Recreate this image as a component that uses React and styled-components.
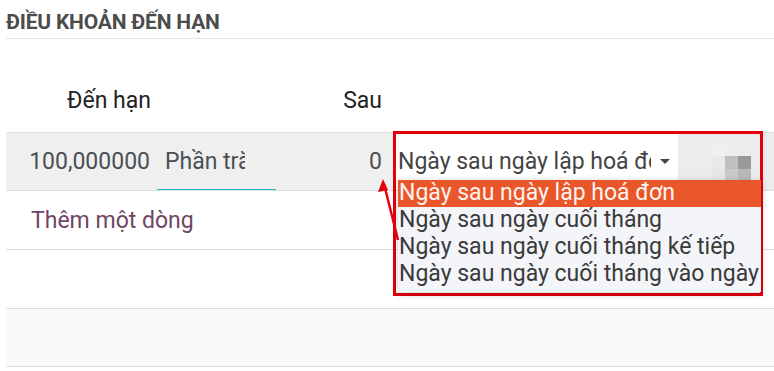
import React from "react";
import styled, { createGlobalStyle } from "styled-components";

const Global = createGlobalStyle`
  html, body { margin: 0; padding: 0; background: #fff; }
  body { font-family: Roboto, "Noto Sans", sans-serif; width: 774px; height: 371px; overflow: hidden; }
`;

const Page = styled.div`
  position: relative;
  padding-left: 6px;
`;

const Title = styled.h2`
  margin: 0;
  height: 39px;
  box-sizing: border-box;
  padding-top: 10px;
  font-size: 21px;
  line-height: 24px;
  font-weight: 700;
  color: #4c4c4c;
  border-bottom: 1px solid #e2e2e2;
  letter-spacing: -0.2px;
`;

const Grid = styled.div`
  display: grid;
  grid-template-columns: 151px 119px 110px 7px 285px 1fr;
`;

const HeadRow = styled.div`
  display: contents;
`;

const HeadCell = styled.div`
  height: 93px;
  box-sizing: border-box;
  display: flex;
  align-items: flex-end;
  justify-content: ${(p) => (p.$right ? "flex-end" : "flex-start")};
  padding: 0 ${(p) => p.$pr || 0}px 18px 0;
  font-size: 23px;
  color: #222;
`;

const Cell = styled.div`
  height: ${(p) => p.$h || 58}px;
  box-sizing: border-box;
  border-top: 1px solid #dedede;
  background: ${(p) => p.$bg || "#fff"};
  display: flex;
  align-items: center;
  justify-content: ${(p) => (p.$right ? "flex-end" : "flex-start")};
  padding-right: ${(p) => p.$pr || 0}px;
  font-size: 23px;
  color: #4a4f55;
  overflow: hidden;
`;

const FullCell = styled(Cell)`
  grid-column: 1 / -1;
  padding-left: 25px;
`;

const LastCell = styled(FullCell)`
  border-bottom: 1px solid #dedede;
`;

const AddLine = styled.span`
  color: #6f4466;
`;

const InputBox = styled.div`
  align-self: stretch;
  width: 100%;
  display: flex;
  align-items: center;
  border-bottom: 1px solid #22b5c4;
  padding-left: 8px;
  box-sizing: border-box;
`;

const Clip = styled.span`
  width: 80px;
  overflow: hidden;
  white-space: nowrap;
`;

const Select = styled.div`
  align-self: stretch;
  width: 100%;
  background: #fff;
  display: flex;
  align-items: center;
  padding-left: 5px;
  box-sizing: border-box;
  color: #444;
`;

const SelectText = styled.span`
  width: 253px;
  overflow: hidden;
  white-space: nowrap;
`;

const Caret = styled.span`
  margin-left: 9px;
  width: 0;
  height: 0;
  border-left: 5px solid transparent;
  border-right: 5px solid transparent;
  border-top: 5px solid #444;
`;

const IconCell = styled(Cell)`
  padding-left: 34px;
`;

const List = styled.ul`
  position: absolute;
  left: 398px;
  top: 180px;
  width: 363px;
  margin: 0;
  padding: 0 0 4px;
  list-style: none;
  background: #f3f5f9;
  box-shadow: 0 2px 8px rgba(0, 0, 0, 0.2);
`;

const Item = styled.li`
  height: 27px;
  line-height: 26px;
  font-size: 23px;
  white-space: nowrap;
  color: ${(p) => (p.$active ? "#fff3ee" : "#3a3a3a")};
  background: ${(p) => (p.$active ? "#e8562a" : "transparent")};
  padding-left: 1px;
`;

const RedBox = styled.div`
  position: absolute;
  left: 393px;
  top: 131px;
  width: 370px;
  height: 165px;
  box-sizing: border-box;
  border: 3px solid #e3000b;
  pointer-events: none;
`;

const ArrowSvg = styled.svg`
  position: absolute;
  left: 370px;
  top: 170px;
  overflow: visible;
`;

const options = [
  "Ngày sau ngày lập hoá đơn",
  "Ngày sau ngày cuối tháng",
  "Ngày sau ngày cuối tháng kế tiếp",
  "Ngày sau ngày cuối tháng vào ngày",
];

const pix = [
  ["#efefef", "#eeeeee", "#ededed"],
  ["#e9e9e9", "#c1bebe", "#99999c"],
  ["#e7e7e7", "#c9c9c9", "#b9b9bc"],
];

function Blur() {
  return (
    <svg width="39" height="38" viewBox="0 0 39 38">
      {pix.map((row, r) =>
        row.map((c, i) => <rect key={r + "-" + i} x={i * 13} y={r * 13} width="13" height="13" fill={c} />)
      )}
    </svg>
  );
}

export default function App() {
  return (
    <>
      <Global />
      <Page>
        <Title>ĐIỀU KHOẢN ĐẾN HẠN</Title>
        <Grid>
          <HeadRow>
            <HeadCell $right $pr={6}>Đến hạn</HeadCell>
            <HeadCell />
            <HeadCell $right $pr={4}>Sau</HeadCell>
            <HeadCell />
            <HeadCell />
            <HeadCell />
          </HeadRow>
          <Cell $bg="#efefef" $right $pr={7}>100,000000</Cell>
          <Cell $bg="#efefef">
            <InputBox><Clip>Phần trăm</Clip></InputBox>
          </Cell>
          <Cell $bg="#efefef" $right $pr={4}>0</Cell>
          <Cell $bg="#efefef" />
          <Cell $bg="#efefef">
            <Select>
              <SelectText>Ngày sau ngày lập hoá đơn</SelectText>
              <Caret />
            </Select>
          </Cell>
          <IconCell $bg="#ececec"><Blur /></IconCell>
          <FullCell $h={59}><AddLine>Thêm một dòng</AddLine></FullCell>
          <FullCell $h={59} />
          <LastCell $h={59} $bg="#fafafa" />
        </Grid>
        <RedBox />
        <List>
          {options.map((o, i) => (
            <Item key={o} $active={i === 0}>{o}</Item>
          ))}
        </List>
        <ArrowSvg width="40" height="80">
          <line x1="28" y1="70" x2="14" y2="14" stroke="#e3000b" strokeWidth="2.5" />
          <polygon points="13,9 8,22 18,20" fill="#e3000b" />
        </ArrowSvg>
      </Page>
    </>
  );
}
